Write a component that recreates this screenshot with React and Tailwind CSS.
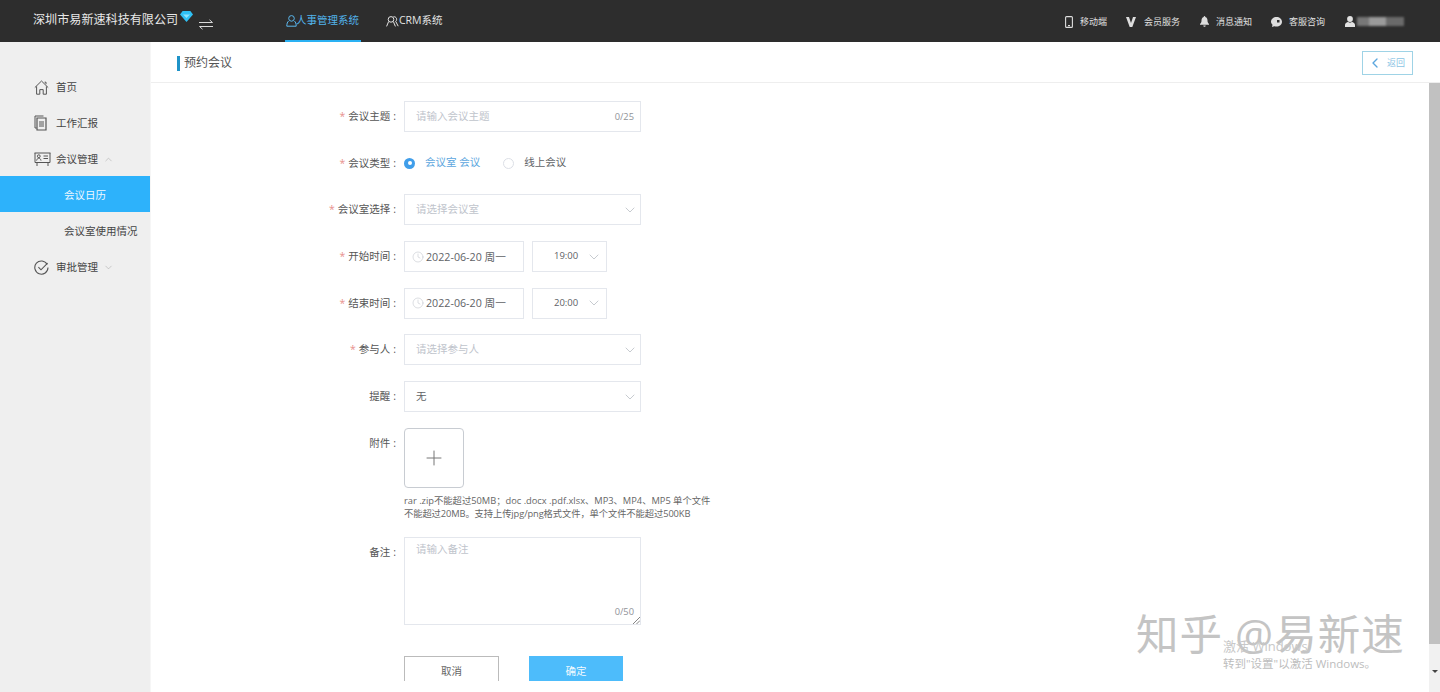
import React from "react";
import { ChevronDown, ChevronUp, ChevronLeft, Clock, Plus } from "lucide-react";

const font = "font-['Open_Sans','Noto_Sans_CJK_SC',sans-serif]";

function HomeIcon() {
  return (
    <svg width="15" height="15" viewBox="0 0 15 15" fill="none" stroke="#555" strokeWidth="1">
      <path d="M0.8 7.6 7.5 1l6.7 6.6M2.6 6.400v7.800h3.200V9.600h3.400v4.600h3.200V6.400M10.600 2.200h1.400v2" />
    </svg>
  );
}
function DocIcon() {
  return (
    <svg width="13" height="16" viewBox="0 0 13 16" fill="none" stroke="#555" strokeWidth="1">
      <path d="M9.500 1H1v12h1.600" />
      <path d="M3 3h9v12H3z" strokeWidth="1.200" />
      <path d="M5 7h5M5 9h5M5 11h5" />
    </svg>
  );
}
function MeetingIcon() {
  return (
    <svg width="17" height="15" viewBox="0 0 17 15" fill="none" stroke="#555" strokeWidth="1">
      <path d="M0.500 1h16M1 1v9.500h15V1M3 10.500V14M14 10.500V14" />
      <circle cx="4.800" cy="4.200" r="1.400" />
      <path d="M2.600 8.600c.3-1.600 1.200-2.400 2.200-2.400s1.900.8 2.200 2.400M9.500 4h4.500M9.500 6.500h4.500" />
    </svg>
  );
}
function CheckIcon() {
  return (
    <svg width="15" height="15" viewBox="0 0 15 15" fill="none" stroke="#555" strokeWidth="1.100">
      <path d="M13.200 4.400A6.600 6.600 0 1 0 14 7.500" />
      <path d="M4.400 7.200 7 9.800l6.600-6.600" />
    </svg>
  );
}
function Diamond() {
  return (
    <svg width="13" height="11" viewBox="0 0 13 11">
      <path d="M2.600 0h7.800L13 3.600 6.500 11 0 3.600z" fill="#2fc0f4" />
      <path d="M3 3.600h7L6.500 7z" fill="#8fe2fb" />
    </svg>
  );
}
function Swap() {
  return (
    <svg width="14" height="11" viewBox="0 0 14 11" fill="none" stroke="#d8d8d8" strokeWidth="1">
      <path d="M0 3.500h13.500L10.500 .8M14 7.500H.5l3 2.700" />
    </svg>
  );
}
function Person({ color }) {
  return (
    <svg width="11" height="12" viewBox="0 0 11 12" fill="none" stroke={color} strokeWidth="1">
      <circle cx="5.500" cy="3.400" r="2.800" />
      <path d="M2.700 6C1.400 7 .8 8.600.8 11.200h9.400C10.200 8.600 9.600 7 8.300 6" />
    </svg>
  );
}
function People() {
  return (
    <svg width="13" height="11" viewBox="0 0 13 11" fill="none" stroke="#e4e4e4" strokeWidth="1">
      <circle cx="5" cy="3.400" r="2.800" />
      <path d="M2.600 5.600 .6 10.400M7.400 5.600l2 4.800M7.400 .8c2.800-.6 4.400 2.800 2.300 4.600l2.500 4.800" />
    </svg>
  );
}
function Phone() {
  return (
    <svg width="8" height="12" viewBox="0 0 8 12" fill="none">
      <rect x=".6" y=".6" width="6.800" height="10.800" rx="1" stroke="#ddd" strokeWidth="1.100" />
      <rect x="3" y="9" width="2" height="1.200" fill="#ddd" />
    </svg>
  );
}
function VIcon() {
  return (
    <svg width="10" height="10" viewBox="0 0 10 10">
      <path d="M0 0h3l2 6 2-6h3L6.300 10H3.700z" fill="#ddd" />
    </svg>
  );
}
function Bell() {
  return (
    <svg width="9" height="11" viewBox="0 0 9 11">
      <path d="M4.500 0C5 0 5.300.4 5.300.9 7 1.400 7.500 3 7.500 4.500c0 1.700.5 2.700 1.500 3.500v.8H0V8c1-.8 1.500-1.800 1.500-3.500C1.500 3 2 1.400 3.700.9 3.700.4 4 0 4.500 0zM3.300 9.400h2.400c0 .8-.5 1.300-1.200 1.300s-1.200-.5-1.200-1.300z" fill="#ddd" />
    </svg>
  );
}
function Chat() {
  return (
    <svg width="11" height="10" viewBox="0 0 11 10">
      <path d="M5.500 0C8.500 0 11 2.100 11 4.800s-2.500 4.800-5.500 4.800c-.8 0-1.500-.1-2.200-.4L1 10l.5-2.300C.6 6.900 0 5.900 0 4.800 0 2.100 2.500 0 5.500 0z" fill="#ddd" />
      <path d="M6 3h2.500v2.500H6z" fill="#2d2d2d" />
    </svg>
  );
}
function UserFill() {
  return (
    <svg width="10" height="11" viewBox="0 0 10 11">
      <circle cx="5" cy="3" r="2.900" fill="#e2e2e2" />
      <path d="M0 11V9c0-1.800 1.800-2.800 3-3l2 .8L7 6c1.200.2 3 1.200 3 3v2z" fill="#e2e2e2" />
    </svg>
  );
}

function TopLink({ icon, text, wide }) {
  return (
    <div className={`flex items-center ${wide ? "gap-[8px]" : "gap-[7px]"}`}>
      {icon}
      <span className="text-[9px] text-[#e0e0e0] leading-none">{text}</span>
    </div>
  );
}

function Header() {
  return (
    <header className="h-[42px] shrink-0 bg-[#2d2d2d] flex items-stretch pl-[33px]">
      <div className="w-[252px] flex items-center">
        <span className="text-[12.100px] text-[#e8e8e8] leading-none mt-[-1px]">深圳市易新速科技有限公司</span>
        <span className="ml-[2px] mt-[-10px]"><Diamond /></span>
        <span className="ml-[6px] mt-[6px]"><Swap /></span>
      </div>
      <div className="w-[101px] flex flex-col">
        <div className="flex-1 flex items-center pl-[1px] pt-[2px] w-[76px]">
          <Person color="#5cb8ee" />
          <span className="text-[10.500px] text-[#52b4ec] ml-[-1px]">人事管理系统</span>
        </div>
        <div className="h-[2px] w-[76px] bg-[#2ab1f3]" />
      </div>
      <div className="flex items-center">
        <People />
        <span className="text-[10.500px] text-[#e4e4e4]">CRM系统</span>
      </div>
      <div className="ml-auto pr-[36px] pt-[1px] flex items-center">
        <TopLink icon={<Phone />} text="移动端" />
        <div className="ml-[19px]"><TopLink wide icon={<VIcon />} text="会员服务" /></div>
        <div className="ml-[20px]"><TopLink icon={<Bell />} text="消息通知" /></div>
        <div className="ml-[19px]"><TopLink icon={<Chat />} text="客服咨询" /></div>
        <div className="ml-[20px] flex items-center gap-[2px]">
          <UserFill />
          <div className="w-[47px] h-[9px] flex blur-[1px]">
            <div className="w-[12px] bg-[#777]" />
            <div className="w-[17px] bg-[#9a9a9a]" />
            <div className="w-[18px] bg-[#6a6a6a]" />
          </div>
        </div>
      </div>
    </header>
  );
}

function NavItem({ icon, text, arrow, active, sub }) {
  return (
    <div
      className={`h-[36px] flex items-center text-[10.500px] pt-[2px] ${
        active ? "bg-[#2db2fb] text-[#f0f8ff]" : "text-[#444]"
      } ${sub ? "pl-[64px]" : "pl-[34px]"}`}
    >
      {icon && <span className="w-[22px] flex items-center">{icon}</span>}
      <span className="mt-[2px]">{text}</span>
      {arrow === "up" && <ChevronUp size={11} strokeWidth={1} className="ml-[5px] text-[#999]" />}
      {arrow === "down" && <ChevronDown size={11} strokeWidth={1} className="ml-[5px] text-[#999]" />}
    </div>
  );
}

function Sidebar() {
  return (
    <aside className="w-[151px] shrink-0 bg-[#efefef] pt-[26px] border-r border-[#f6f6f6]">
      <NavItem icon={<HomeIcon />} text="首页" />
      <NavItem icon={<DocIcon />} text="工作汇报" />
      <NavItem icon={<MeetingIcon />} text="会议管理" arrow="up" />
      <NavItem text="会议日历" active sub />
      <NavItem text="会议室使用情况" sub />
      <NavItem icon={<CheckIcon />} text="审批管理" arrow="down" />
    </aside>
  );
}

function Row({ label, required, children, top }) {
  return (
    <div className="flex">
      <div
        className={`w-[253px] shrink-0 pr-[8px] text-right text-[10.500px] text-[#555] ${
          top ? "leading-[30px]" : "h-[31px] leading-[31px]"
        }`}
      >
        {required && <span className="text-[#e8908c] mr-[3px]">*</span>}
        {label}
        <span className="ml-[3px]">:</span>
      </div>
      {children}
    </div>
  );
}

function Select({ text, placeholder }) {
  return (
    <div className="w-[237px] h-[31px] border border-[#e4e7ed] flex items-center justify-between pl-[11px] pr-[2px] text-[10.500px]">
      <span className={placeholder ? "text-[#c0c4cc]" : "text-[#606266]"}>{text}</span>
      <ChevronDown size={16} strokeWidth={1} className="text-[#aab0b8]" />
    </div>
  );
}

function DateTime({ date, time }) {
  return (
    <div className="flex gap-[8px]">
      <div className="w-[120px] h-[31px] border border-[#e4e7ed] flex items-center pl-[7px] gap-[2px] text-[10.700px] text-[#606266]">
        <Clock size={12} strokeWidth={1} className="text-[#b8bcc4] shrink-0" />
        <span className="whitespace-nowrap">{date}</span>
      </div>
      <div className="w-[75px] h-[31px] border border-[#e4e7ed] flex items-center pl-[21px] pr-[4px] justify-between text-[9.500px] text-[#606266]">
        <span>{time}</span>
        <ChevronDown size={16} strokeWidth={1} className="text-[#aab0b8]" />
      </div>
    </div>
  );
}

function Form() {
  return (
    <div className="h-[598px] flex-1 overflow-hidden pt-[18px] flex flex-col">
      <div className="flex flex-col gap-[15.700px]">
        <Row label="会议主题" required>
          <div className="w-[237px] h-[31px] border border-[#e4e7ed] flex items-center justify-between pl-[11px] pr-[6px] text-[10.500px]">
            <span className="text-[#c0c4cc]">请输入会议主题</span>
            <span className="text-[9.300px] text-[#909399]">0/25</span>
          </div>
        </Row>
        <Row label="会议类型" required>
          <div className="flex items-center text-[10.500px]">
            <span className="w-[11px] h-[11px] rounded-full bg-[#409eea] flex items-center justify-center">
              <span className="w-[4px] h-[4px] rounded-full bg-white" />
            </span>
            <span className="ml-[10px] text-[#5ba6de]">会议室 会议</span>
            <span className="ml-[23px] w-[11px] h-[11px] rounded-full border border-[#dcdfe6]" />
            <span className="ml-[10px] text-[#606266]">线上会议</span>
          </div>
        </Row>
        <Row label="会议室选择" required>
          <Select text="请选择会议室" placeholder />
        </Row>
        <Row label="开始时间" required>
          <DateTime date="2022-06-20 周一" time="19:00" />
        </Row>
        <Row label="结束时间" required>
          <DateTime date="2022-06-20 周一" time="20:00" />
        </Row>
        <Row label="参与人" required>
          <Select text="请选择参与人" placeholder />
        </Row>
        <Row label="提醒">
          <Select text="无" />
        </Row>
        <Row label="附件" top>
          <div>
            <div className="w-[60px] h-[60px] rounded-[4px] border border-[#c8ccd2] flex items-center justify-center">
              <Plus size={24} strokeWidth={1} className="text-[#777]" />
            </div>
            <div className="mt-[6px] w-[330px] text-[9.300px] leading-[13px] text-[#666]">
              <div>rar .zip不能超过50MB；doc .docx .pdf.xlsx、MP3、MP4、MP5 单个文件</div>
              <div className="tracking-[-0.1px]">不能超过20MB。支持上传jpg/png格式文件，单个文件不能超过500KB</div>
            </div>
          </div>
        </Row>
      </div>
      <div className="mt-[17px]">
        <Row label="备注" top>
          <div className="relative w-[237px] h-[88px] border border-[#e4e7ed] pl-[11px] pt-[4px] text-[10.500px] text-[#c0c4cc]">
            请输入备注
            <span className="absolute right-[6px] bottom-[5px] text-[9.300px] text-[#909399]">0/50</span>
            <svg className="absolute right-0 bottom-0" width="7" height="7" viewBox="0 0 7 7" stroke="#666" strokeWidth=".8">
              <path d="M0 7 7 0M3.500 7 7 3.500" />
            </svg>
          </div>
        </Row>
      </div>
      <div className="mt-[31px] pl-[253px] flex gap-[30px] text-[10.500px]">
        <div className="w-[95px] h-[40px] shrink-0 border border-[#bbb] text-[#666] text-center leading-[29px]">取消</div>
        <div className="w-[94px] h-[40px] shrink-0 bg-[#4dbcfb] text-[#f2faff] text-center leading-[31px]">确定</div>
      </div>
    </div>
  );
}

function Scrollbar() {
  return (
    <div className="w-[11px] shrink-0 bg-[#f1f1f1] flex flex-col">
      <div className="h-[561px] bg-[#c1c1c1] shrink-0" />
      <div className="mt-auto h-[42px] flex items-center justify-center">
        <div className="w-0 h-0 border-l-[3px] border-r-[3px] border-t-[3px] border-l-transparent border-r-transparent border-t-[#444]" />
      </div>
    </div>
  );
}

export default function App() {
  return (
    <div className={`relative w-[1440px] h-[692px] overflow-hidden flex flex-col bg-white ${font}`}>
      <Header />
      <div className="flex-1 flex min-h-0">
        <Sidebar />
        <main className="flex-1 flex flex-col min-w-0">
          <div className="h-[41px] shrink-0 border-b border-[#eeeeee] flex items-center justify-between pl-[26px] pr-[27px] pt-[2px]">
            <div className="flex items-center gap-[4px]">
              <span className="w-[3px] h-[15px] bg-[#1f93c8]" />
              <span className="text-[12px] text-[#555]">预约会议</span>
            </div>
            <div className="w-[51px] h-[24px] border border-[#9fd3e6] flex items-center pl-[4px] gap-[4px] text-[9px] text-[#8cc4e4]">
              <ChevronLeft size={16} strokeWidth={2} className="text-[#5ba6de]" />
              <span>返回</span>
            </div>
          </div>
          <div className="flex-1 flex min-h-0">
            <Form />
            <Scrollbar />
          </div>
        </main>
      </div>
      <div className="absolute left-[1136px] top-[604px] text-[42.500px] leading-[60px] text-[#c4c4c4] tracking-[1px] whitespace-nowrap">
        知乎 @易新速
      </div>
      <div className="absolute left-[1223px] top-[637px] text-[13px] leading-[18px] text-[#c8c8c8]">激活 Windows</div>
      <div className="absolute left-[1223px] top-[655px] text-[11.500px] leading-[18px] text-[#bdbdbd]">转到"设置"以激活 Windows。</div>
    </div>
  );
}
